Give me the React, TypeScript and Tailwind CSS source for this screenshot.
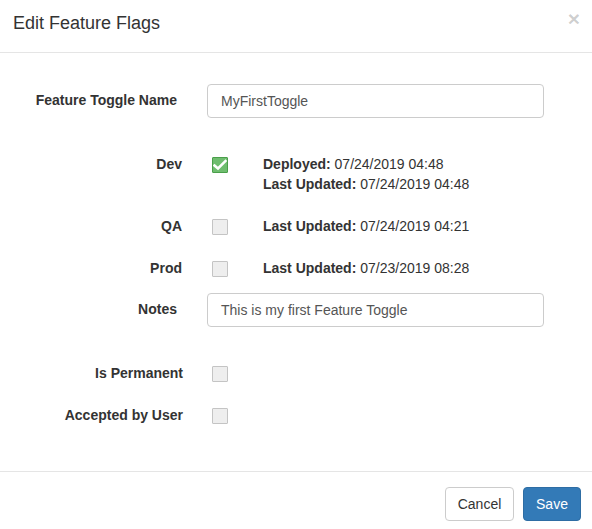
import React from "react";

function Box({ checked }: { checked?: boolean }) {
  if (checked) {
    return (
      <div className="mt-[3px] ml-[5px] flex h-[16px] w-[16px] shrink-0 items-center justify-center rounded-[1px] border border-[#4a9f4a] bg-[#6fbd6f]">
        <svg width="14" height="12" viewBox="0 0 14 12">
          <path d="M1.5 6.5 L5 9.5 L12.5 2" fill="none" stroke="#ffffff" strokeWidth="2.6" strokeLinecap="square" />
        </svg>
      </div>
    );
  }
  return <div className="mt-[3px] ml-[5px] h-[16px] w-[16px] shrink-0 rounded-[1px] border border-[#c4c4c4] bg-[#eeeeee]" />;
}

function Stamp({ label, value }: { label: string; value: string }) {
  return (
    <div className="leading-[20px]">
      <span className="font-bold">{label}</span> {value}
    </div>
  );
}

export default function App() {
  return (
    <div
      className="h-[529px] w-full overflow-hidden bg-white text-[14px] text-[#333333]"
      style={{ fontFamily: '"Liberation Sans", Arial, sans-serif' }}
    >
      <div className="flex h-[53px] items-start justify-between border-b border-[#e5e5e5] pl-[13px] pr-[12px]">
        <h4 className="pt-[11px] text-[18px] leading-[25px] font-normal text-[#333333]">Edit Feature Flags</h4>
        <span className="pt-[6px] text-[21px] leading-[25px] font-bold text-black/20">×</span>
      </div>

      <div className="pt-[31px]">
        <div className="grid grid-cols-[207px_337px]">
          <label className="pt-[6px] pr-[30px] text-right font-bold leading-[20px]">Feature Toggle Name</label>
          <div className="flex h-[34px] items-center rounded-[4px] border border-[#cccccc] px-[13px] text-[#555555]">
            MyFirstToggle
          </div>
        </div>

        <div className="mt-[36px] grid grid-cols-[207px_1fr]">
          <label className="pr-[25px] text-right font-bold leading-[20px]">Dev</label>
          <div className="flex">
            <Box checked />
            <div className="ml-[35px]">
              <Stamp label="Deployed:" value="07/24/2019 04:48" />
              <Stamp label="Last Updated:" value="07/24/2019 04:48" />
            </div>
          </div>
        </div>

        <div className="mt-[22px] grid grid-cols-[207px_1fr]">
          <label className="pr-[25px] text-right font-bold leading-[20px]">QA</label>
          <div className="flex">
            <Box />
            <div className="ml-[35px]">
              <Stamp label="Last Updated:" value="07/24/2019 04:21" />
            </div>
          </div>
        </div>

        <div className="mt-[22px] grid grid-cols-[207px_1fr]">
          <label className="pr-[25px] text-right font-bold leading-[20px]">Prod</label>
          <div className="flex">
            <Box />
            <div className="ml-[35px]">
              <Stamp label="Last Updated:" value="07/23/2019 08:28" />
            </div>
          </div>
        </div>

        <div className="mt-[15px] grid grid-cols-[207px_337px]">
          <label className="pt-[6px] pr-[30px] text-right font-bold leading-[20px]">Notes</label>
          <div className="flex h-[34px] items-center rounded-[4px] border border-[#cccccc] px-[13px] text-[#555555]">
            This is my first Feature Toggle
          </div>
        </div>

        <div className="mt-[36px] grid grid-cols-[207px_1fr]">
          <label className="pr-[24px] text-right font-bold leading-[20px]">Is Permanent</label>
          <div className="flex">
            <Box />
          </div>
        </div>

        <div className="mt-[22px] grid grid-cols-[207px_1fr]">
          <label className="pr-[24px] text-right font-bold leading-[20px]">Accepted by User</label>
          <div className="flex">
            <Box />
          </div>
        </div>
      </div>

      <div className="mt-[46px] flex justify-end gap-[9px] border-t border-[#e5e5e5] pt-[15px] pr-[11px]">
        <button className="h-[34px] w-[69px] rounded-[4px] border border-[#cccccc] bg-white text-[14px] text-[#333333]">
          Cancel
        </button>
        <button className="h-[34px] w-[58px] rounded-[4px] border border-[#2e6da4] bg-[#337ab7] text-[14px] text-white">
          Save
        </button>
      </div>
    </div>
  );
}
